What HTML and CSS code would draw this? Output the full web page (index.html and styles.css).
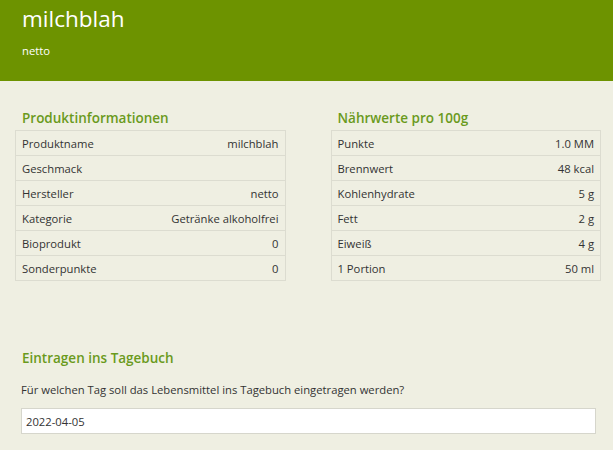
FILE: index.html
```html
<!DOCTYPE html>
<html>

<head>
  <title>milchblah</title>
  <link rel="stylesheet" href="styles.css">
</head>

<body>
  <!-- Kopfbereich mit Produktname und Hersteller -->
  <header class="top">
    <h1>milchblah</h1>
    <p>netto</p>
  </header>

  <!-- Produktdaten und Nährwerte -->
  <div class="columns">
    <section>
      <h2>Produktinformationen</h2>
      <table class="info">
        <tr><td>Produktname</td><td>milchblah</td></tr>
        <tr><td>Geschmack</td><td></td></tr>
        <tr><td>Hersteller</td><td>netto</td></tr>
        <tr><td>Kategorie</td><td>Getränke alkoholfrei</td></tr>
        <tr><td>Bioprodukt</td><td>0</td></tr>
        <tr><td>Sonderpunkte</td><td>0</td></tr>
      </table>
    </section>
    <section>
      <h2>Nährwerte pro 100g</h2>
      <table class="info">
        <tr><td>Punkte</td><td>1.0 MM</td></tr>
        <tr><td>Brennwert</td><td>48 kcal</td></tr>
        <tr><td>Kohlenhydrate</td><td>5 g</td></tr>
        <tr><td>Fett</td><td>2 g</td></tr>
        <tr><td>Eiweiß</td><td>4 g</td></tr>
        <tr><td>1 Portion</td><td>50 ml</td></tr>
      </table>
    </section>
  </div>

  <!-- Eintrag ins Tagebuch -->
  <section class="diary">
    <h2>Eintragen ins Tagebuch</h2>
    <p>Für welchen Tag soll das Lebensmittel ins Tagebuch eingetragen werden?</p>
    <input type="text" value="2022-04-05">
  </section>
</body>

</html>
```

FILE: styles.css
```css
* {
  margin: 0;
  padding: 0;
  box-sizing: border-box;
}

body {
  background: #efefe2;
  color: #333;
  font-family: "Open Sans", sans-serif;
  font-size: 11.25px;
}

/* Header */
.top {
  height: 81px;
  background: #6d9300;
  color: #fff;
  padding: 4px 22px 0;
}

.top h1 {
  font-size: 22.5px;
  font-weight: 400;
  line-height: 30px;
}

.top p {
  margin-top: 9px;
  font-size: 11.25px;
  line-height: 16px;
}

/* Section headings */
h2 {
  color: #6a9a1c;
  font-size: 13.5px;
  font-weight: 600;
  line-height: 18px;
}

/* Two tables side by side */
.columns {
  display: grid;
  grid-template-columns: 1fr 1fr;
  gap: 45px;
  padding: 28px 12px 0 15px;
}

.columns h2 {
  padding-left: 7px;
  margin-bottom: 3px;
}

.info {
  width: 100%;
  border-collapse: collapse;
  border: 1px solid #dcdcd0;
}

.info td {
  height: 25px;
  padding: 1px 6px 0;
  border-top: 1px solid #dcdcd0;
  line-height: 16px;
  white-space: nowrap;
}

.info td:last-child {
  text-align: right;
}

/* Diary form */
.diary {
  padding: 68px 17px 0 21px;
}

.diary h2 {
  padding-left: 1px;
}

.diary p {
  margin-top: 15px;
  line-height: 16px;
}

.diary input {
  display: block;
  width: 100%;
  height: 26px;
  margin-top: 10px;
  padding: 0 4px;
  border: 1px solid #d6d6cc;
  background: #fff;
  color: #333;
  font-family: "Open Sans", sans-serif;
  font-size: 11.25px;
  outline: 0;
}
```
